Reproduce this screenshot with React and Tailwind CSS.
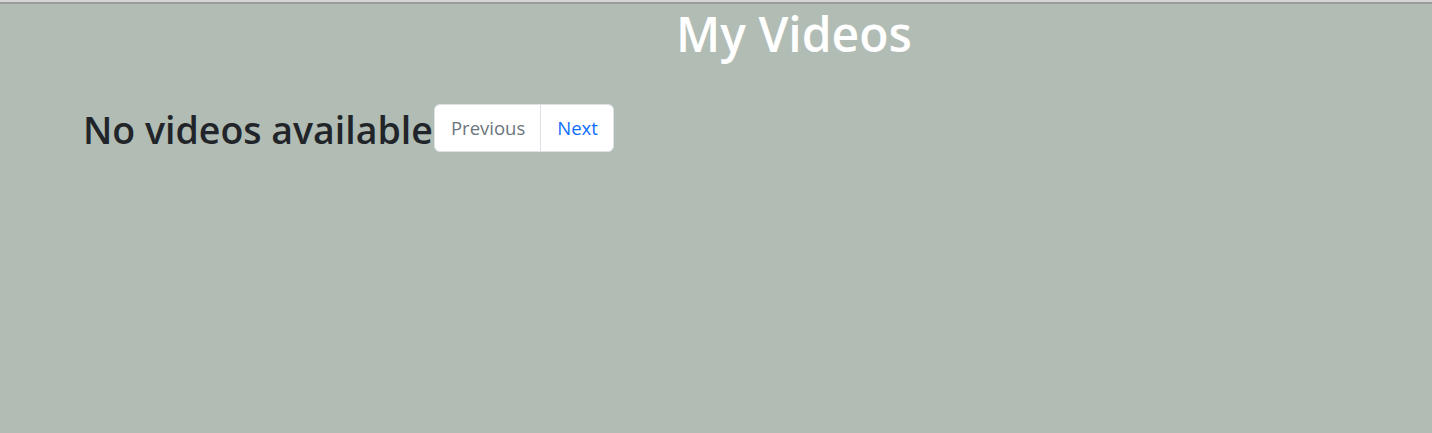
export default function App() {
  return (
    <div
      className="min-h-[433px] w-full bg-[#b1bcb4]"
      style={{ fontFamily: '"Open Sans", "Noto Sans", sans-serif' }}
    >
      <div className="h-[2px] bg-[#d4d4d4]" />
      <div className="h-[2px] bg-[#9a9a9a]" />
      <h1 className="text-white font-semibold text-[48px] leading-[58px] ml-[676px] pt-[1px]">
        My Videos
      </h1>
      <div className="flex items-start mt-[41px] ml-[83px]">
        <h2 className="text-[#212529] font-semibold text-[37.5px] leading-[48px] mt-[2px]">
          No videos available
        </h2>
        <ul className="flex bg-white border border-[#dee2e6] rounded-[6px] text-[18.5px] leading-[30px] h-[48px] ml-[1px]">
          <li className="pl-[16px] pr-[15px] py-[8px] text-[#6c757d] border-r border-[#dee2e6]">Previous</li>
          <li className="pl-[16px] pr-[15px] py-[8px] text-[#0d6efd]">Next</li>
        </ul>
      </div>
    </div>
  );
}
